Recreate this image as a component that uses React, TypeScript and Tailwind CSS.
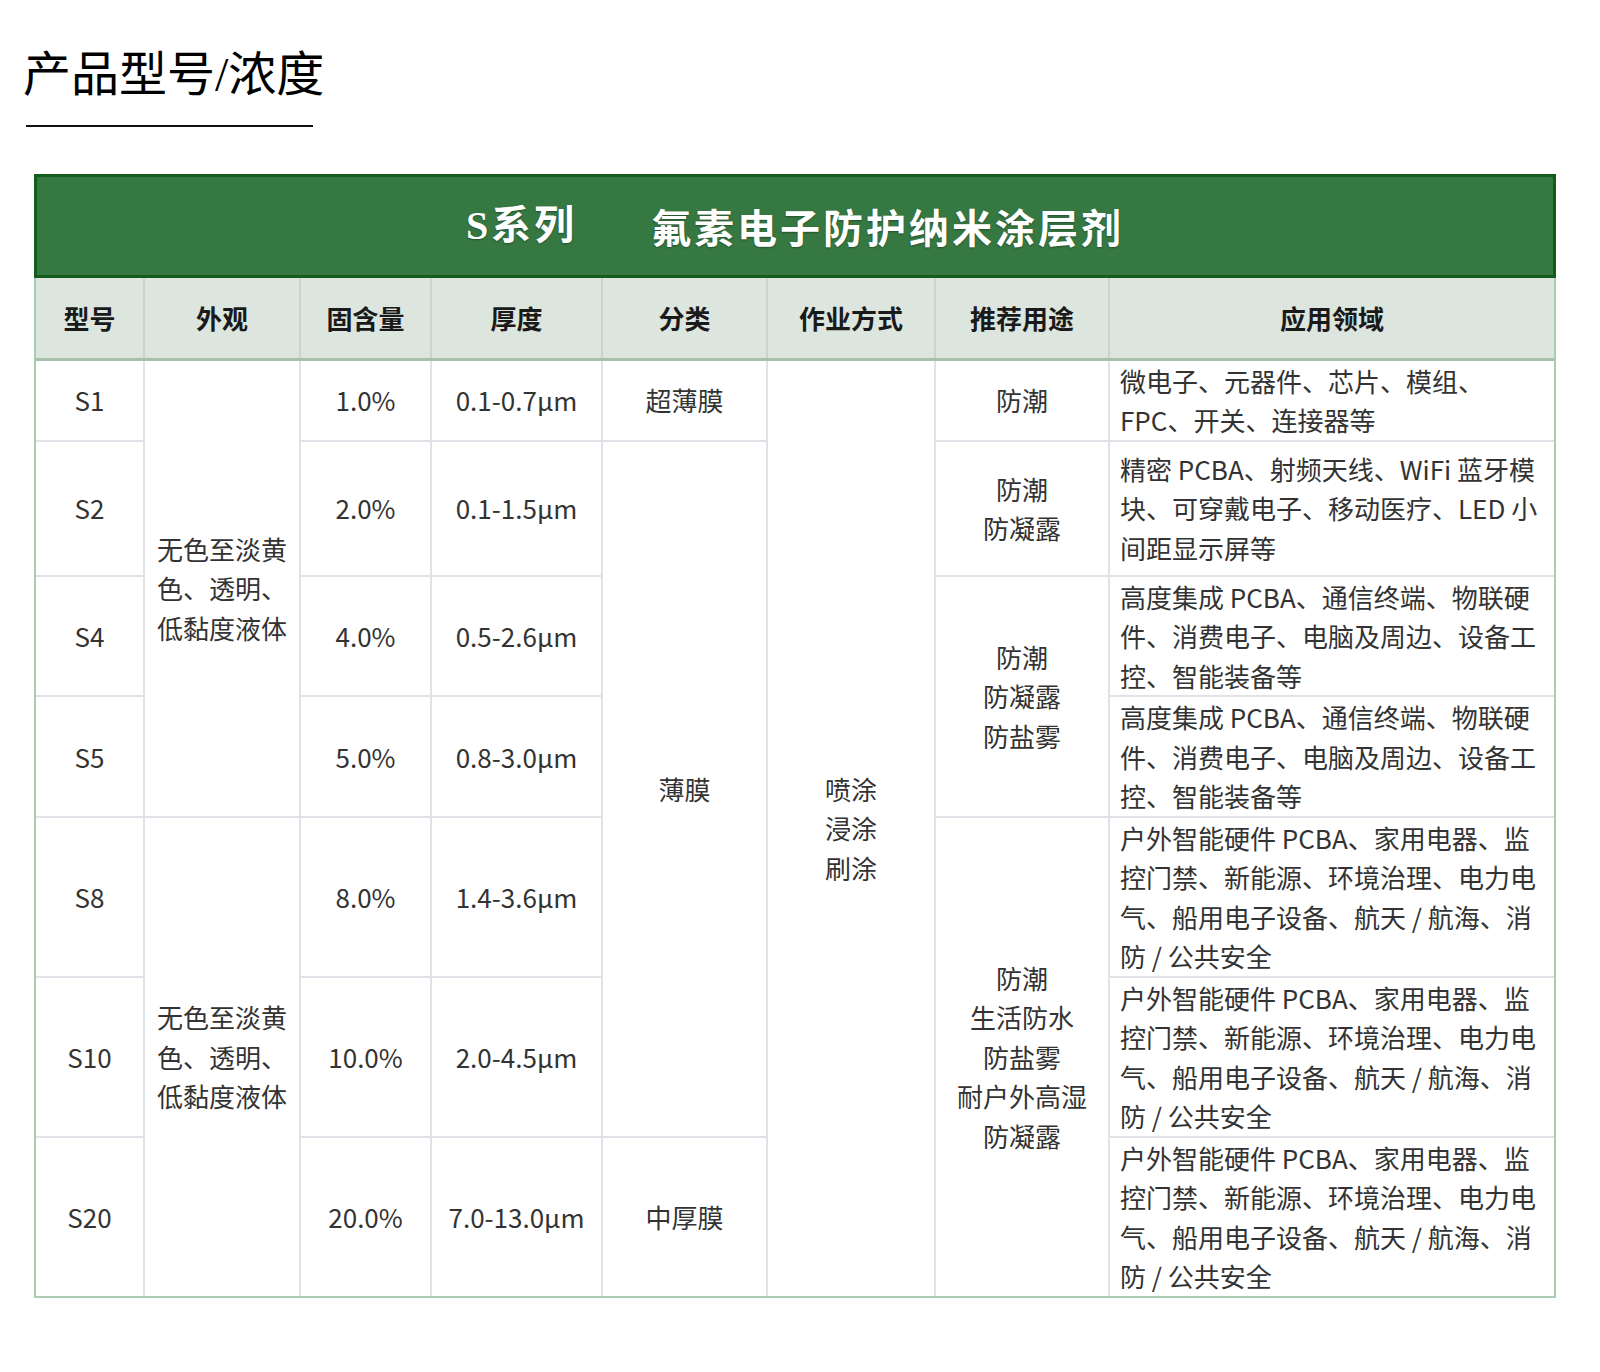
import React from 'react'

const font = { fontFamily: '"Noto Sans CJK SC", "Noto Sans", sans-serif' }

interface CellProps {
    lines: string[];
    rowSpan?: number;
    left?: boolean;
}

const Cell = ({ lines, rowSpan, left }: CellProps) => {
    return (
        <td
            rowSpan={rowSpan}
            className={`border-2 border-[#e0e2e7] align-middle p-0 ${left ? 'text-left pl-[10px]' : 'text-center'}`}
        >
            {lines.map((l, i) => (
                <div key={i} className="whitespace-nowrap leading-[39.5px]">{l}</div>
            ))}
        </td>
    )
}

const headers = ['型号', '外观', '固含量', '厚度', '分类', '作业方式', '推荐用途', '应用领域']

const outdoor = ['户外智能硬件 PCBA、家用电器、监', '控门禁、新能源、环境治理、电力电', '气、船用电子设备、航天 / 航海、消', '防 / 公共安全']
const dense = ['高度集成 PCBA、通信终端、物联硬', '件、消费电子、电脑及周边、设备工', '控、智能装备等']
const look = ['无色至淡黄', '色、透明、', '低黏度液体']

const App = () => {
    return (
        <div className="w-[1600px] h-[1372px] bg-white text-[#333]" style={font}>
            {/* page title */}
            <div className="pt-[45px] pl-[23px]">
                <h1
                    className="text-[48px] leading-[60px] text-black font-normal"
                    style={{ fontFamily: '"Liberation Serif", "Noto Sans CJK SC", serif' }}
                >
                    产品型号/浓度
                </h1>
                <div className="mt-[20px] ml-[3px] w-[287px] h-[2px] bg-[#111]" />
            </div>

            <div className="mt-[47px] ml-[34px] w-[1522px]">
                {/* green band */}
                <div className="h-[104px] bg-[#367842] border-[3px] border-[#145c1c] flex items-center justify-center text-white text-[40px] font-bold tracking-[3px] [text-shadow:0_1px_2px_rgba(0,0,0,0.35)]">
                    <span style={{ fontFamily: '"Liberation Serif", "Noto Sans CJK SC", serif' }}>S系列</span>
                    <span className="ml-[74px]">氟素电子防护纳米涂层剂</span>
                </div>

                <div className="border-x-2 border-b-2 border-[#a9cdb0]">
                    <table className="w-full table-fixed border-collapse border-hidden text-[26px]">
                        <colgroup>
                            <col className="w-[108px]" />
                            <col className="w-[156px]" />
                            <col className="w-[131px]" />
                            <col className="w-[171px]" />
                            <col className="w-[165px]" />
                            <col className="w-[168px]" />
                            <col className="w-[174px]" />
                            <col className="w-[445px]" />
                        </colgroup>
                        <thead>
                            <tr className="h-[81px] bg-[#dce5de]">
                                {headers.map(h => (
                                    <th
                                        key={h}
                                        className="border-x-2 border-b-[3px] border-x-[#c9d4cb] border-b-[#a8c0ab] font-bold text-[#1a1a1a] text-[26px] align-middle"
                                    >
                                        {h}
                                    </th>
                                ))}
                            </tr>
                        </thead>
                        <tbody>
                            <tr className="h-[78px]">
                                <Cell lines={['S1']} />
                                <Cell lines={look} rowSpan={4} />
                                <Cell lines={['1.0%']} />
                                <Cell lines={['0.1-0.7μm']} />
                                <Cell lines={['超薄膜']} />
                                <Cell lines={['喷涂', '浸涂', '刷涂']} rowSpan={7} />
                                <Cell lines={['防潮']} />
                                <Cell lines={['微电子、元器件、芯片、模组、', 'FPC、开关、连接器等']} left />
                            </tr>
                            <tr className="h-[135px]">
                                <Cell lines={['S2']} />
                                <Cell lines={['2.0%']} />
                                <Cell lines={['0.1-1.5μm']} />
                                <Cell lines={['薄膜']} rowSpan={5} />
                                <Cell lines={['防潮', '防凝露']} />
                                <Cell lines={['精密 PCBA、射频天线、WiFi 蓝牙模', '块、可穿戴电子、移动医疗、LED 小', '间距显示屏等']} left />
                            </tr>
                            <tr className="h-[117px]">
                                <Cell lines={['S4']} />
                                <Cell lines={['4.0%']} />
                                <Cell lines={['0.5-2.6μm']} />
                                <Cell lines={['防潮', '防凝露', '防盐雾']} rowSpan={2} />
                                <Cell lines={dense} left />
                            </tr>
                            <tr className="h-[117px]">
                                <Cell lines={['S5']} />
                                <Cell lines={['5.0%']} />
                                <Cell lines={['0.8-3.0μm']} />
                                <Cell lines={dense} left />
                            </tr>
                            <tr className="h-[157px]">
                                <Cell lines={['S8']} />
                                <Cell lines={look} rowSpan={3} />
                                <Cell lines={['8.0%']} />
                                <Cell lines={['1.4-3.6μm']} />
                                <Cell lines={['防潮', '生活防水', '防盐雾', '耐户外高湿', '防凝露']} rowSpan={3} />
                                <Cell lines={outdoor} left />
                            </tr>
                            <tr className="h-[157px]">
                                <Cell lines={['S10']} />
                                <Cell lines={['10.0%']} />
                                <Cell lines={['2.0-4.5μm']} />
                                <Cell lines={outdoor} left />
                            </tr>
                            <tr className="h-[158px]">
                                <Cell lines={['S20']} />
                                <Cell lines={['20.0%']} />
                                <Cell lines={['7.0-13.0μm']} />
                                <Cell lines={['中厚膜']} />
                                <Cell lines={outdoor} left />
                            </tr>
                        </tbody>
                    </table>
                </div>
            </div>
        </div>
    )
}

export default App
